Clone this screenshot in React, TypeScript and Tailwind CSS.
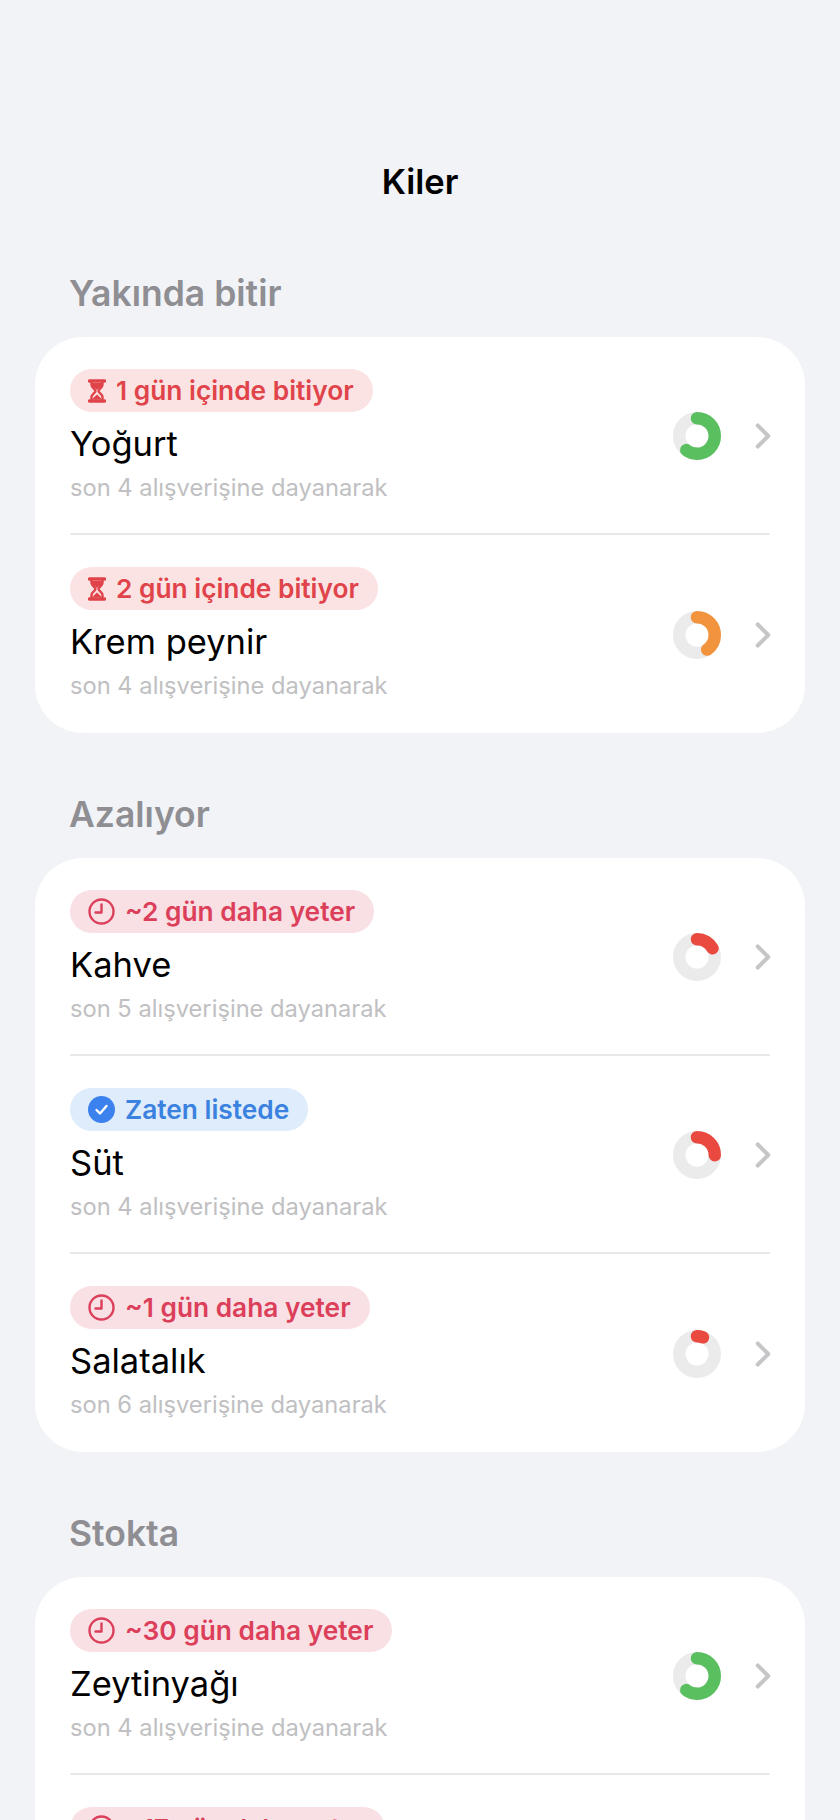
import { ChevronRight } from 'lucide-react';

type Tone = 'hourglass' | 'clock' | 'check';

interface Item {
  badge: string;
  tone: Tone;
  name?: string;
  basis?: string;
  pct: number;
  color: string;
}

const soon: Item[] = [
  { badge: '1 gün içinde bitiyor', tone: 'hourglass', name: 'Yoğurt', basis: 'son 4 alışverişine dayanarak', pct: 0.6, color: '#5ac05f' },
  { badge: '2 gün içinde bitiyor', tone: 'hourglass', name: 'Krem peynir', basis: 'son 4 alışverişine dayanarak', pct: 0.4, color: '#f2933e' },
];

const low: Item[] = [
  { badge: '~2 gün daha yeter', tone: 'clock', name: 'Kahve', basis: 'son 5 alışverişine dayanarak', pct: 0.167, color: '#e9493f' },
  { badge: 'Zaten listede', tone: 'check', name: 'Süt', basis: 'son 4 alışverişine dayanarak', pct: 0.25, color: '#e9493f' },
  { badge: '~1 gün daha yeter', tone: 'clock', name: 'Salatalık', basis: 'son 6 alışverişine dayanarak', pct: 0.055, color: '#e9493f' },
];

// second row runs off the bottom of the screen, only the badge top shows
const stock: Item[] = [
  { badge: '~30 gün daha yeter', tone: 'clock', name: 'Zeytinyağı', basis: 'son 4 alışverişine dayanarak', pct: 0.6, color: '#5ac05f' },
  { badge: '~17 gün daha yeter', tone: 'clock', pct: 0.6, color: '#5ac05f' },
];

function BadgeIcon({ tone }: { tone: Tone }) {
  if (tone === 'hourglass') {
    return (
      <svg width="18" height="24" viewBox="0 0 18 24" className="shrink-0">
        <path d="M1.500 2h15M1.500 22h15" stroke="#e0444a" strokeWidth="3.400" strokeLinecap="round" fill="none" />
        <path d="M3.500 3v3c0 3 4 4 4 6s-4 3-4 6v3M14.500 3v3c0 3-4 4-4 6s4 3 4 6v3" stroke="#e0444a" strokeWidth="2.400" fill="none" />
        <path d="M4 4h10v2c0 2-3.500 3.500-5 5-1.500-1.500-5-3-5-5zM4.500 20.500c.5-2.500 3.500-3.500 4.500-5 1 1.500 4 2.500 4.500 5z" fill="#e0444a" />
      </svg>
    );
  }
  if (tone === 'clock') {
    return (
      <svg width="27" height="27" viewBox="0 0 27 27" className="shrink-0">
        <circle cx="13.500" cy="13.500" r="12" stroke="#dc3f5a" strokeWidth="2.400" fill="none" />
        <path d="M13.500 6.500V14.500H7.500" stroke="#dc3f5a" strokeWidth="2.400" strokeLinecap="round" strokeLinejoin="round" fill="none" />
      </svg>
    );
  }
  return (
    <svg width="27" height="27" viewBox="0 0 27 27" className="shrink-0">
      <circle cx="13.500" cy="13.500" r="13.500" fill="#3b82ee" />
      <path d="M8.500 14l3.500 3.500 6.500-7.500" stroke="#fff" strokeWidth="2.400" strokeLinecap="round" strokeLinejoin="round" fill="none" />
    </svg>
  );
}

function Ring({ pct, color }: { pct: number; color: string }) {
  const r = 17.75;
  const c = 2 * Math.PI * r;
  return (
    <svg width="48" height="48" viewBox="0 0 48 48" className="shrink-0 -rotate-90">
      <circle cx="24" cy="24" r={r} stroke="#ebebeb" strokeWidth="12.500" fill="none" />
      <circle
        cx="24"
        cy="24"
        r={r}
        stroke={color}
        strokeWidth="12.500"
        strokeLinecap="round"
        fill="none"
        strokeDasharray={`${c * pct} ${c}`}
      />
    </svg>
  );
}

function Badge({ tone, text }: { tone: Tone; text: string }) {
  const style =
    tone === 'check'
      ? 'bg-[#deecfc] text-[#3b82e0]'
      : tone === 'clock'
        ? 'bg-[#f9e0e4] text-[#dc3f5a]'
        : 'bg-[#fbe3e3] text-[#e0444a]';
  return (
    <div className={`inline-flex h-[43px] items-center gap-[10px] self-start rounded-full pl-[18px] pr-[19px] text-[26.300px] font-semibold ${style}`}>
      <BadgeIcon tone={tone} />
      <span>{text}</span>
    </div>
  );
}

function Row({ item, last }: { item: Item; last: boolean }) {
  return (
    <div className={`mx-[35px] flex h-[198px] ${last ? '' : 'border-b-2 border-[#e8e8ea]'}`}>
      <div className="flex min-w-0 flex-1 flex-col pt-[32px]">
        <Badge tone={item.tone} text={item.badge} />
        {item.name && <div className="mt-[6px] text-[34.500px] leading-[52px] text-black">{item.name}</div>}
        {item.basis && <div className="mt-[1px] text-[23.700px] leading-[34px] text-[#c0c0c2]">{item.basis}</div>}
      </div>
      <div className="flex items-center gap-[21px] pt-[1px]">
        <Ring pct={item.pct} color={item.color} />
        <ChevronRight size={42} strokeWidth={2.300} className="-mr-[14px] text-[#c6c6c8]" />
      </div>
    </div>
  );
}

function Section({ title, items }: { title: string; items: Item[] }) {
  return (
    <section>
      <h2 className="pl-[69px] text-[35.500px] font-semibold leading-[44px] text-[#8e8e93]">{title}</h2>
      <div className="mx-[35px] mt-[21px] rounded-[48px] bg-white">
        {items.map((item, i) => (
          <Row key={item.badge} item={item} last={i === items.length - 1} />
        ))}
      </div>
    </section>
  );
}

export default function App() {
  return (
    <div className="h-[1820px] overflow-hidden bg-[#f2f3f7] font-['Inter',sans-serif]">
      <h1 className="pt-[160px] text-center text-[34.500px] font-semibold leading-[44px] text-black">Kiler</h1>
      <div className="mt-[68px] flex flex-col gap-[60px]">
        <Section title="Yakında bitir" items={soon} />
        <Section title="Azalıyor" items={low} />
        <Section title="Stokta" items={stock} />
      </div>
    </div>
  );
}
